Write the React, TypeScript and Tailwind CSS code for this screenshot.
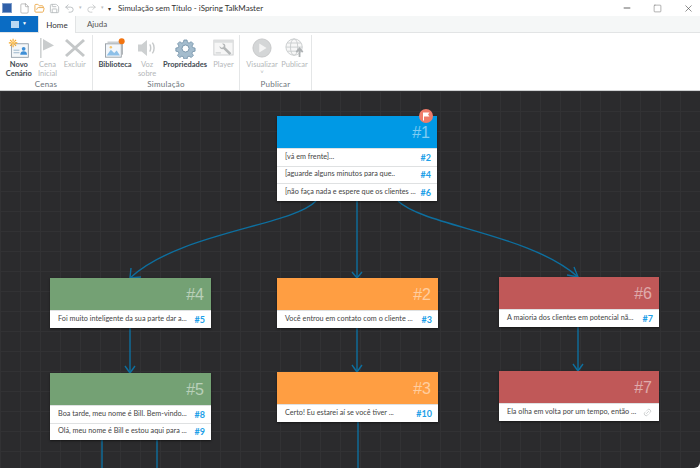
import { File, FolderOpen, Save, Undo2, Redo2, Minus, Square, X, Link2 } from "lucide-react";

const font = "font-['Lato','Roboto',sans-serif]";

const nodes = [
  {
    id: "#1",
    pos: "left-[277px] top-[25px]",
    width: "w-[160px]",
    color: "bg-[#0099e5]",
    rows: [
      ["[vá em frente]...", "#2"],
      ["[aguarde alguns minutos para que..", "#4"],
      ["[não faça nada e espere que os clientes ...", "#6"],
    ],
  },
  {
    id: "#4",
    pos: "left-[50px] top-[187px]",
    width: "w-[161px]",
    color: "bg-[#74a174]",
    rows: [["Foi muito inteligente da sua parte dar a...", "#5"]],
  },
  {
    id: "#5",
    pos: "left-[50px] top-[282px]",
    width: "w-[161px]",
    color: "bg-[#74a174]",
    rows: [
      ["Boa tarde, meu nome é Bill. Bem-vindo...", "#8"],
      ["Olá, meu nome é Bill e estou aqui para ...", "#9"],
    ],
  },
  {
    id: "#2",
    pos: "left-[277px] top-[187px]",
    width: "w-[161px]",
    color: "bg-[#ff9e42]",
    rows: [["Você entrou em contato com o cliente ...", "#3"]],
  },
  {
    id: "#3",
    pos: "left-[277px] top-[281px]",
    width: "w-[161px]",
    color: "bg-[#ff9e42]",
    rows: [["Certo! Eu estarei aí se você tiver ...", "#10"]],
  },
  {
    id: "#6",
    pos: "left-[499px] top-[186px]",
    width: "w-[160px]",
    color: "bg-[#c05858]",
    rows: [["A maioria dos clientes em potencial nã...", "#7"]],
  },
  {
    id: "#7",
    pos: "left-[499px] top-[280px]",
    width: "w-[160px]",
    color: "bg-[#c05858]",
    rows: [["Ela olha em volta por um tempo, então ...", ""]],
  },
];

function NovoIcon() {
  return (
    <svg width="22" height="22" viewBox="0 0 26 24">
      <rect x="4" y="7" width="20" height="16" fill="#f4f7f9" stroke="#8b98a3" />
      <rect x="6.5" y="14" width="7" height="1.2" fill="#9db7cc" />
      <rect x="6.5" y="17" width="7" height="1.2" fill="#9db7cc" />
      <circle cx="18.5" cy="13" r="2.2" fill="#3f8fd6" />
      <path d="M14.5 20c0-3 1.5-4.2 4-4.2s4 1.2 4 4.2z" fill="#3f8fd6" />
      <path d="M6 1v3M6 8v3M1 6h3M8 6h3M2.5 2.5l2 2M7.5 7.5l2 2M9.500 2.500l-2 2M4.500 7.500l-2 2" stroke="#f5a623" strokeWidth="1.300" />
      <circle cx="6" cy="6" r="2" fill="#fbc25a" />
    </svg>
  );
}

function FlagIcon() {
  return (
    <svg width="16" height="20" viewBox="0 0 16 20">
      <rect x="1" y="0" width="1.600" height="20" fill="#cfd2d3" />
      <path d="M4 1l11 6.500-11 5z" fill="#c9cccd" />
    </svg>
  );
}

function DeleteIcon() {
  return (
    <svg width="20" height="20" viewBox="0 0 20 20">
      <path d="M1 2l18 16M19 2L1 18" stroke="#c4c7c8" strokeWidth="3" />
    </svg>
  );
}

function LibraryIcon() {
  return (
    <svg width="22" height="20" viewBox="0 0 26 24">
      <path d="M4 5h18v15" fill="none" stroke="#a0a6aa" />
      <rect x="1.500" y="7" width="19" height="16" fill="#f3f7fb" stroke="#8d959b" />
      <path d="M3 21l5-7 4 4 3-3 4 6z" fill="#8dc0e8" />
      <circle cx="8" cy="11" r="1.500" fill="#f7c56c" />
      <circle cx="21" cy="4" r="3.600" fill="#f2730f" />
    </svg>
  );
}

function VoiceIcon() {
  return (
    <svg width="20" height="18" viewBox="0 0 22 20">
      <path d="M1 6h4l6-5v18l-6-5H1z" fill="#cdd0d1" />
      <path d="M14 6c1.500 2 1.500 6 0 8M17 4c2.500 3 2.500 9 0 12" fill="none" stroke="#c6c9ca" strokeWidth="1.600" />
    </svg>
  );
}

function GearIcon() {
  return (
    <svg width="21" height="21" viewBox="0 0 24 24">
      <path
        d="M10 1h4l.7 3.200 2 .8 2.800-1.800 2.800 2.800-1.800 2.800.8 2 3.200.7v4l-3.200.7-.8 2 1.800 2.800-2.800 2.800-2.800-1.800-2 .8-.7 3.200h-4l-.7-3.200-2-.8-2.800 1.800-2.800-2.800 1.800-2.800-.8-2-3.200-.7v-4l3.200-.7.8-2-1.800-2.800 2.800-2.800 2.800 1.800 2-.8z"
        fill="#a4bccd"
        stroke="#6f8ea5"
        transform="translate(1.400 1.400) scale(.88)"
      />
      <circle cx="12" cy="12" r="4" fill="#fff" stroke="#6f8ea5" />
    </svg>
  );
}

function PlayerIcon() {
  return (
    <svg width="21" height="18" viewBox="0 0 24 20">
      <rect x="1" y="1" width="22" height="17" fill="#f6f6f6" stroke="#c8cbcc" />
      <rect x="1" y="1" width="22" height="3" fill="#dddfe0" />
      <rect x="3" y="15" width="6" height="1.200" fill="#c8cbcc" />
      <path d="M21 16l-7-7c.800-2.500-1-4.500-3.500-4l2 2-.8 2-2.200.6-2-2c-.3 2.600 1.800 4.200 4.300 3.600l7 6.800z" fill="#b4b7b8" />
    </svg>
  );
}

function PlayIcon() {
  return (
    <svg width="20" height="20" viewBox="0 0 22 22">
      <circle cx="11" cy="11" r="10" fill="#d4d6d7" stroke="#c4c6c7" />
      <path d="M8 6l8 5-8 5z" fill="#f4f4f4" />
    </svg>
  );
}

function GlobeIcon() {
  return (
    <svg width="20" height="20" viewBox="0 0 22 22" fill="none" stroke="#c9cccd">
      <circle cx="10" cy="10" r="9" fill="#f7f7f7" />
      <ellipse cx="10" cy="10" rx="4" ry="9" />
      <path d="M1 10h18M2.500 5.500h15M2.500 14.500h15" />
      <path d="M16 21v-8M12.500 15.500l3.500-4 3.500 4" stroke="#aeb2b4" strokeWidth="2" />
    </svg>
  );
}

function Tool({
  icon,
  label,
  disabled,
  width,
}: {
  icon: React.ReactNode;
  label: string;
  disabled?: boolean;
  width: string;
}) {
  return (
    <div className={`${width} flex flex-col items-center`}>
      <div className="h-[24px] flex items-center justify-center">{icon}</div>
      <div
        className={`text-center text-[7.500px] leading-[9px] whitespace-pre ${
          disabled ? "text-[#b4b7b9]" : "text-[#3f4a52] font-bold"
        }`}
      >
        {label}
      </div>
    </div>
  );
}

function RibbonGroup({ title, width, children }: { title: string; width: string; children: React.ReactNode }) {
  return (
    <div className={`${width} h-[55px] flex flex-col border-r border-[#e4e6e7]`}>
      <div className="flex flex-1 pt-[1px]">{children}</div>
      <div className="pb-[1px] text-center text-[8px] leading-[10px] tracking-[0.2px] text-[#6d757b]">{title}</div>
    </div>
  );
}

function Node({ node }: { node: (typeof nodes)[number] }) {
  return (
    <div className={`absolute ${node.pos} ${node.width} bg-white shadow-[0_1px_2px_rgba(0,0,0,0.5)]`}>
      <div className={`${node.color} h-[32px] flex items-center justify-end pr-[7px] pt-[2px]`}>
        <span className="text-[16px] text-white/50 font-['Liberation_Sans',sans-serif]">{node.id}</span>
      </div>
      {node.rows.map(([text, link], i) => (
        <div
          key={i}
          className="h-[17.500px] flex items-center justify-between pl-[8px] pr-[6px] border-t border-[#dfe1e2]"
        >
          <span className="text-[7.250px] text-[#444] whitespace-nowrap">{text}</span>
          {link ? (
            <span className="text-[9px] font-bold text-[#1d9fe8]">{link}</span>
          ) : (
            <Link2 size={9} className="text-[#c4c6c7] mr-[1px] -rotate-45" />
          )}
        </div>
      ))}
      {node.id === "#1" && (
        <div className="absolute -top-[7px] right-[4px] w-[14px] h-[14px] rounded-full bg-[#ef7c6a] flex items-center justify-center">
          <svg width="8" height="9" viewBox="0 0 8 9">
            <rect x="1" y="0.500" width="1" height="8" fill="#fff" />
            <path d="M2 .500h5.500L6 2.500l1.500 2H2z" fill="#fff" />
          </svg>
        </div>
      )}
    </div>
  );
}

const links = [
  "M316 201C292 226 180 232 130 278",
  "M357 201V278",
  "M398 201C424 226 530 234 578 277",
  "M130 327V373",
  "M357 327V372",
  "M578 326V371",
  "M102 440V468",
  "M157 440V468",
  "M358 421V468",
];

const heads = [
  "M131 268L130 278L141 277",
  "M352 272L357 278L362 272",
  "M567 275L578 277L574 267",
  "M125 366L130 373L135 366",
  "M352 365L357 372L362 365",
  "M573 364L578 371L583 364",
];

export default function App() {
  return (
    <div className={`w-[700px] h-[468px] bg-white flex flex-col overflow-hidden ${font}`}>
      {/* title bar */}
      <div className="h-[16px] flex items-center pl-[2px] text-[#555]">
        <div className="w-[10px] h-[10px] bg-[#2f5fa8] border border-[#7f9ecb]" />
        <div className="flex items-center gap-[4px] ml-[7px]">
          <File size={11} strokeWidth={1} className="text-[#777]" />
          <FolderOpen size={11} className="text-[#eaa84a]" />
          <Save size={11} className="text-[#b9bdc0]" />
          <Undo2 size={11} className="text-[#b9bdc0]" />
          <span className="text-[5px] text-[#b9bdc0]">▾</span>
          <Redo2 size={11} className="text-[#c8cbcc]" />
          <span className="text-[5px] text-[#b9bdc0]">▾</span>
          <span className="text-[6px] text-[#333]">▾</span>
        </div>
        <span className="ml-[7px] text-[8px] text-[#333]">Simulação sem Título - iSpring TalkMaster</span>
        <div className="ml-auto mr-[6px] flex items-center gap-[21px] text-[#444]">
          <Minus size={10} />
          <Square size={9} strokeWidth={1.500} className="text-[#777]" />
          <X size={11} strokeWidth={1.300} />
        </div>
      </div>

      {/* tabs */}
      <div className="h-[17px] flex items-stretch bg-[#f5f7f7] border-b border-[#e2e4e5]">
        <div className="w-[38px] bg-[#0a6cc4] flex items-center justify-center gap-[3px]">
          <div className="w-[8px] h-[7px] bg-[#b9d8f3]" />
          <span className="text-[5px] text-white">▼</span>
        </div>
        <div className="w-[38px] -mb-[1px] bg-white border-x border-[#e2e4e5] flex items-center justify-center text-[8px] text-[#333]">
          Home
        </div>
        <div className="w-[42px] flex items-center justify-center text-[8px] text-[#555]">Ajuda</div>
      </div>

      {/* ribbon */}
      <div className="h-[58px] flex pt-[2px] border-b border-[#cfd1d2]">
        <RibbonGroup title="Cenas" width="w-[93px]">
          <Tool width="w-[38px]" icon={<NovoIcon />} label={"Novo\nCenário"} />
          <Tool width="w-[20px]" icon={<FlagIcon />} label={"Cena\nInicial"} disabled />
          <Tool width="w-[35px]" icon={<DeleteIcon />} label="Excluir" disabled />
        </RibbonGroup>
        <RibbonGroup title="Simulação" width="w-[147px]">
          <Tool width="w-[44px]" icon={<LibraryIcon />} label="Biblioteca" />
          <Tool width="w-[20px]" icon={<VoiceIcon />} label={"Voz\nsobre"} disabled />
          <Tool width="w-[56px]" icon={<GearIcon />} label="Propriedades" />
          <Tool width="w-[21px]" icon={<PlayerIcon />} label="Player" disabled />
        </RibbonGroup>
        <RibbonGroup title="Publicar" width="w-[72px]">
          <Tool width="w-[44px]" icon={<PlayIcon />} label={"Visualizar\n˅"} disabled />
          <Tool width="w-[21px]" icon={<GlobeIcon />} label="Publicar" disabled />
        </RibbonGroup>
      </div>

      {/* canvas */}
      <div className="relative flex-1 rounded-br-[6px] bg-[#2b2b2d] bg-[image:linear-gradient(#323234_1px,transparent_1px),linear-gradient(90deg,#323234_1px,transparent_1px)] bg-[size:20px_20px] overflow-hidden">
        <svg className="absolute inset-0" width="700" height="377" viewBox="0 91 700 377" fill="none">
          {links.map((d) => (
            <path key={d} d={d} stroke="#0d6f9f" strokeWidth="1.400" />
          ))}
          {heads.map((d) => (
            <path key={d} d={d} stroke="#0d6f9f" strokeWidth="1.400" />
          ))}
        </svg>
        {nodes.map((node) => (
          <Node key={node.id} node={node} />
        ))}
      </div>
    </div>
  );
}
